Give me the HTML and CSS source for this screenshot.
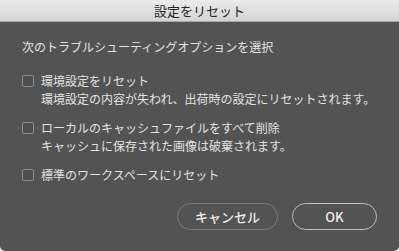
FILE: index.html
```html
<!DOCTYPE html>
<html lang="ja">
<head>
<meta charset="utf-8">
<link rel="stylesheet" href="styles.css">
</head>
<body>
<div class="dialog">
  <div class="titlebar">設定をリセット</div>
  <div class="content">
    <div class="heading">次のトラブルシューティングオプションを選択</div>
    <div class="options">
      <div class="option">
        <div class="row"><span class="box"></span><span class="label">環境設定をリセット</span></div>
        <div class="desc">環境設定の内容が失われ、出荷時の設定にリセットされます。</div>
      </div>
      <div class="option">
        <div class="row"><span class="box"></span><span class="label">ローカルのキャッシュファイルをすべて削除</span></div>
        <div class="desc">キャッシュに保存された画像は破棄されます。</div>
      </div>
      <div class="option">
        <div class="row"><span class="box"></span><span class="label">標準のワークスペースにリセット</span></div>
      </div>
    </div>
    <div class="buttons">
      <button class="btn cancel">キャンセル</button>
      <button class="btn ok">OK</button>
    </div>
  </div>
</div>
</body>
</html>
```

FILE: styles.css
```css
html, body {
  margin: 0;
  padding: 0;
  background: #ffffff;
}
body {
  font-family: "Noto Sans CJK JP", "Noto Sans", sans-serif;
}
.dialog {
  width: 399px;
  height: 251px;
  background: #535353;
  border-radius: 0 0 5px 5px;
  overflow: hidden;
  display: flex;
  flex-direction: column;
}
.titlebar {
  height: 21px;
  line-height: 21px;
  border-bottom: 1px solid #a9a9a9;
  background: linear-gradient(#ebebeb, #d4d4d4);
  text-align: center;
  font-size: 13px;
  color: #262626;
}
.content {
  padding: 17px 22px 0 22px;
  color: #e2e2e2;
  font-size: 12px;
}
.heading {
  line-height: 16px;
}
.options {
  margin-top: 17px;
  display: flex;
  flex-direction: column;
  gap: 11px;
}
.row {
  display: flex;
  align-items: center;
  height: 18px;
}
.box {
  width: 10px;
  height: 10px;
  border: 1px solid #8e8e8e;
  border-radius: 2px;
  background: #4e4e4e;
  margin-right: 7px;
}
.label, .desc {
  line-height: 18px;
}
.desc {
  padding-left: 19px;
}
.buttons {
  margin-top: 19px;
  display: flex;
  justify-content: flex-end;
  gap: 14px;
}
.btn {
  height: 27px;
  border-radius: 14px;
  background: transparent;
  color: #ececec;
  font-family: "Noto Sans CJK JP", "Noto Sans", sans-serif;
  font-size: 13px;
  font-weight: 500;
  padding: 0;
}
.cancel {
  width: 101px;
  border: 1px solid #7c7c7c;
}
.ok {
  width: 85px;
  border: 1.5px solid #bdbdbd;
}
```
